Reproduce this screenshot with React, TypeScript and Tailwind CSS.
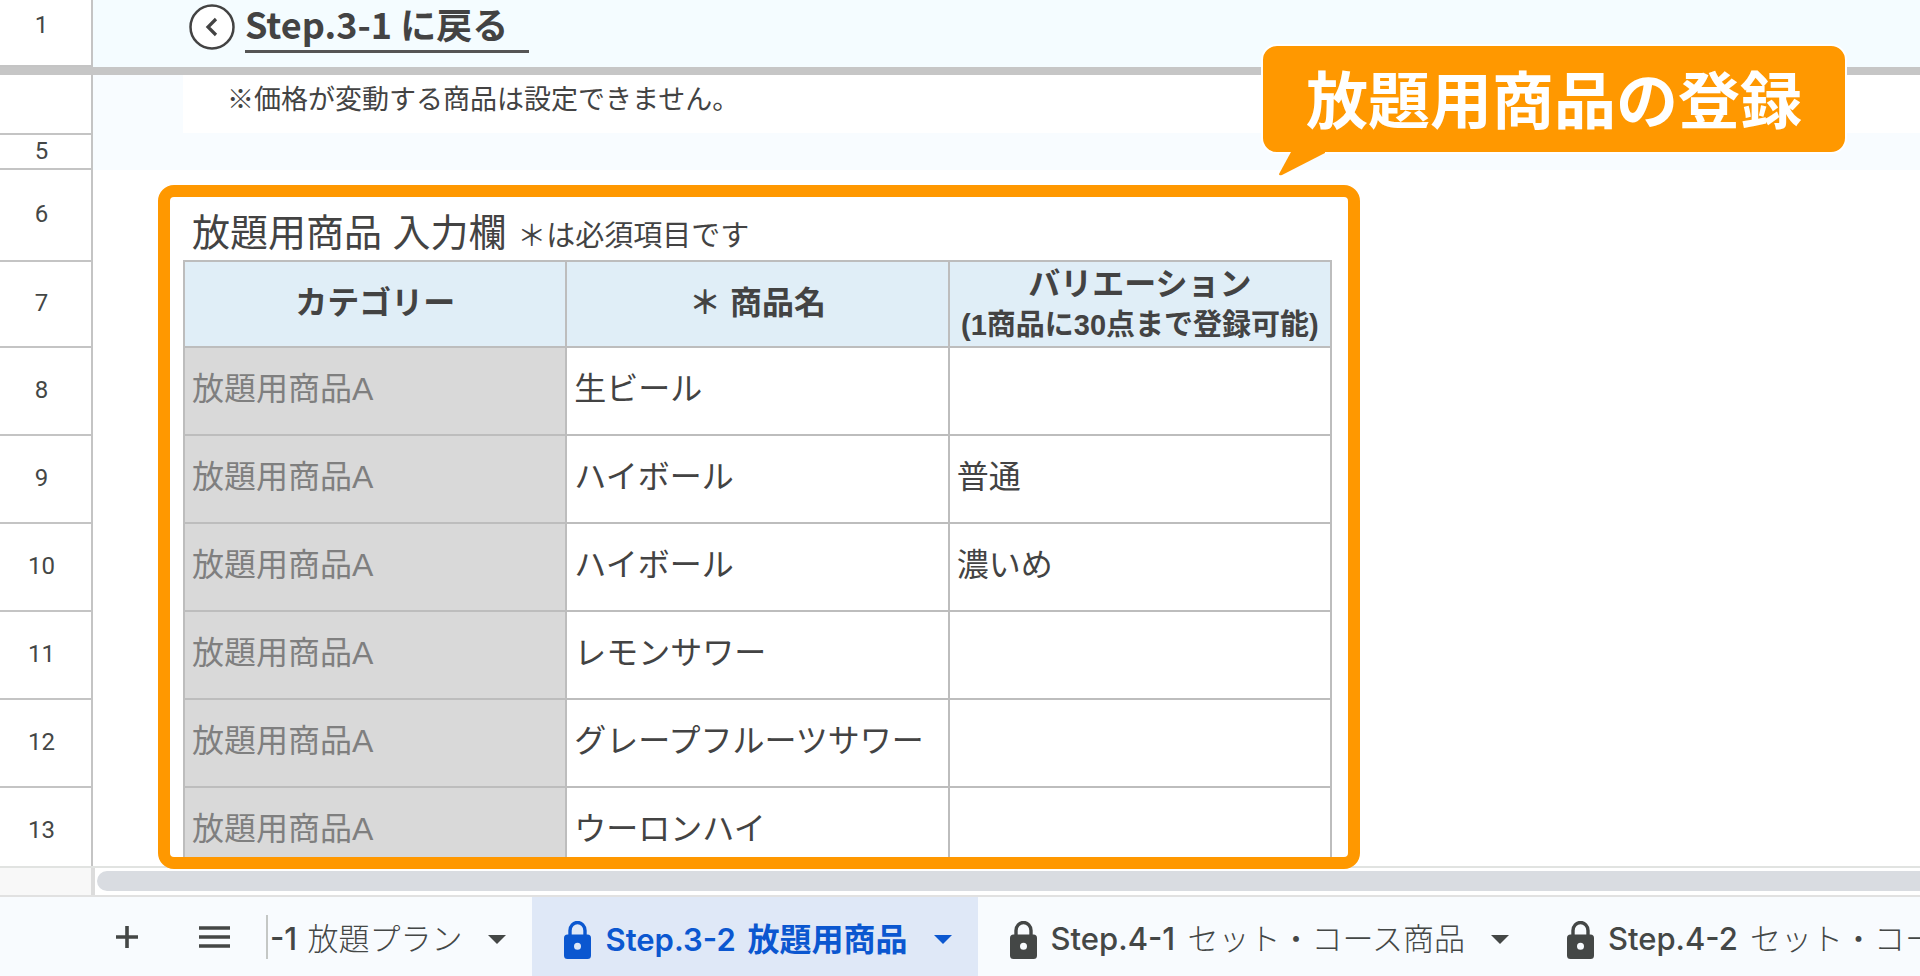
type Product = { row: number; category: string; name: string; variation: string };

const products: Product[] = [
    { row: 8, category: "放題用商品A", name: "生ビール", variation: "" },
    { row: 9, category: "放題用商品A", name: "ハイボール", variation: "普通" },
    { row: 10, category: "放題用商品A", name: "ハイボール", variation: "濃いめ" },
    { row: 11, category: "放題用商品A", name: "レモンサワー", variation: "" },
    { row: 12, category: "放題用商品A", name: "グレープフルーツサワー", variation: "" },
    { row: 13, category: "放題用商品A", name: "ウーロンハイ", variation: "" },
];

const rowHeaders = [
    { label: "", height: "h-[60px]" },
    { label: "5", height: "h-[35px]" },
    { label: "6", height: "h-[92px]" },
    { label: "7", height: "h-[86px]" },
    ...products.map((p) => ({ label: String(p.row), height: "h-[88px]" })),
];

function RowHeader({ label, height }: { label: string; height: string }) {
    return (
        <div
            className={`${height} flex shrink-0 items-center justify-center border-b-2 border-[#c4c4c4] pr-2 pb-0.5 font-['Roboto',sans-serif] text-2xl text-[#444746]`}
        >
            {label}
        </div>
    );
}

function LockIcon() {
    return (
        <svg width="27" height="38" viewBox="0 0 27 38" className="shrink-0" aria-hidden="true">
            <path d="M6 15V9.5a7.5 8 0 0 1 15 0V15" fill="none" stroke="currentColor" strokeWidth="3.4" />
            <path
                fillRule="evenodd"
                fill="currentColor"
                d="M3.5 13.5h20A3.5 3.5 0 0 1 27 17v17.500a3.500 3.500 0 0 1-3.500 3.500h-20A3.500 3.500 0 0 1 0 34.500V17a3.500 3.500 0 0 1 3.500-3.500zM13.500 21.800a3.500 3.500 0 1 0 0 7 3.500 3.500 0 0 0 0-7z"
            />
        </svg>
    );
}

function Caret() {
    return (
        <svg width="18" height="9" viewBox="0 0 18 9" className="shrink-0" aria-hidden="true">
            <path d="M0 0h18L9 9z" fill="currentColor" />
        </svg>
    );
}

function SheetTab({ step, name, active = false }: { step: string; name: string; active?: boolean }) {
    return (
        <button
            type="button"
            role="tab"
            aria-selected={active}
            className={`flex h-full shrink-0 items-center pt-1.5 pr-[26px] pl-8 whitespace-nowrap ${
                active ? "bg-[#dfe8f7] text-[#0b57d0]" : "text-[#444746]"
            }`}
        >
            <LockIcon />
            <span className={active ? "ml-3.5 font-semibold" : "ml-3.5 font-medium"}>
                {step} <span className={active ? "ml-1 text-[32px] font-semibold" : "ml-1 font-light"}>{name}</span>
            </span>
            <span className="ml-[26px]">
                <Caret />
            </span>
        </button>
    );
}

function ProductTable() {
    return (
        <table className="ml-[90px] w-[1149px] table-fixed border-separate border-spacing-0 border-t-2 border-l-2 border-[#bdbdbd] text-[32px] leading-10">
            <thead>
                <tr className="h-[86px] bg-[#e0eef7] text-center">
                    <th className="border-r-2 border-b-2 border-[#bdbdbd] p-0 pb-0.5">カテゴリー</th>
                    <th className="border-r-2 border-b-2 border-[#bdbdbd] p-0 pb-0.5">＊ 商品名</th>
                    <th className="border-r-2 border-b-2 border-[#bdbdbd] p-0 whitespace-nowrap">
                        バリエーション
                        <br />
                        <span className="text-[29px]">(1商品に30点まで登録可能)</span>
                    </th>
                </tr>
            </thead>
            <tbody>
                {products.map((p) => (
                    <tr key={p.row} className="h-[88px]">
                        <td className="border-r-2 border-b-2 border-[#bdbdbd] bg-[#d9d9d9] p-0 pb-1 pl-[7px] text-[#7f7f7f]">
                            {p.category}
                        </td>
                        <td className="border-r-2 border-b-2 border-[#bdbdbd] p-0 pb-1 pl-[7px]">{p.name}</td>
                        <td className="border-r-2 border-b-2 border-[#bdbdbd] p-0 pb-1 pl-[7px]">{p.variation}</td>
                    </tr>
                ))}
            </tbody>
        </table>
    );
}

function Callout() {
    return (
        <div className="absolute top-11 right-[73px] rounded-2xl border-2 border-white bg-[#ff9800] px-[43px] pt-1.5 pb-2.5 font-['Noto_Sans_CJK_JP',sans-serif] text-[62px] leading-[90px] font-bold whitespace-nowrap text-white">
            放題用商品の登録
            <svg width="52" height="28" viewBox="0 0 52 28" className="absolute top-full left-3" aria-hidden="true">
                <path d="M16 0L4 22q0 2 3 1L50 1V0z" fill="#ff9800" />
            </svg>
        </div>
    );
}

export default function App() {
    return (
        <div className="relative flex h-screen flex-col overflow-hidden bg-white font-['Liberation_Sans','Noto_Sans_CJK_JP',sans-serif] text-[#434343]">
            {/* frozen row */}
            <div className="flex h-[67px] shrink-0">
                <div className="flex w-[93px] shrink-0 items-center justify-center border-r-2 border-b-2 border-[#c4c4c4] pr-2 pb-4 font-['Roboto',sans-serif] text-2xl text-[#444746]">
                    1
                </div>
                <div className="flex-1 bg-[#f4fcff] pl-24">
                    <a
                        href="#step-3-1"
                        className="flex items-start gap-2.5 font-['Noto_Sans_CJK_JP',sans-serif] text-[36px] leading-[46px] font-bold"
                    >
                        <svg width="46" height="46" viewBox="0 0 46 46" className="mt-1" aria-hidden="true">
                            <circle cx="23" cy="23" r="21.500" fill="#fff" stroke="currentColor" strokeWidth="2.500" />
                            <path d="M27 15l-8 8 8 8" fill="none" stroke="currentColor" strokeWidth="3.200" />
                        </svg>
                        <span className="min-w-[284px] border-b-[3px] border-[#555] pb-1">Step.3-1 に戻る</span>
                    </a>
                </div>
            </div>
            <div className="h-2 shrink-0 bg-[#c6c6c6]" />

            <div className="relative min-h-0 flex-1">
                <div className="flex h-full overflow-hidden">
                    <div className="flex w-[93px] shrink-0 flex-col border-r-2 border-[#c4c4c4]">
                        {rowHeaders.map((r, i) => (
                            <RowHeader key={i} label={r.label} height={r.height} />
                        ))}
                    </div>
                    <div className="min-w-0 flex-1">
                        <div className="h-[95px] bg-[#f8fcff] pl-[90px]">
                            <p className="h-[58px] bg-white pl-11 font-['Noto_Sans_CJK_JP',sans-serif] text-[27px] leading-[46px]">
                                ※価格が変動する商品は設定できません。
                            </p>
                        </div>
                        <h2 className="flex h-[90px] items-end pl-[99px] text-[38px] leading-[48px] whitespace-pre">
                            <span>
                                放題用商品 入力欄 <span className="text-[29px]">＊は必須項目です</span>
                            </span>
                        </h2>
                        <ProductTable />
                    </div>
                </div>
                <div className="pointer-events-none absolute top-[110px] -bottom-[3px] left-[158px] z-10 w-[1202px] rounded-2xl border-[12px] border-[#ff9800]" />
            </div>

            {/* horizontal scrollbar */}
            <div className="flex h-[29px] shrink-0 border-t-2 border-[#e1e3e1]">
                <div className="w-[95px] shrink-0 border-r-4 border-[#dcdcdc] bg-[#f8f8f8]" />
                <div className="flex-1 pt-[3px] pl-0.5">
                    <div className="h-5 rounded-l-full bg-[#d9dce1]" />
                </div>
            </div>

            <nav className="flex h-[81px] shrink-0 items-center border-t-2 border-[#e1e1e1] bg-[#f8fbfe] font-['Inter','Noto_Sans_CJK_JP',sans-serif] text-[31px] text-[#444746]">
                <button type="button" aria-label="シートを追加" className="ml-[116px]">
                    <svg width="22" height="22" viewBox="0 0 22 22" aria-hidden="true">
                        <path d="M11 0v22M0 11h22" stroke="currentColor" strokeWidth="3.600" />
                    </svg>
                </button>
                <button type="button" aria-label="すべてのシート" className="ml-[61px]">
                    <svg width="31" height="22" viewBox="0 0 31 22" aria-hidden="true">
                        <path d="M0 2h31M0 11h31M0 20h31" stroke="currentColor" strokeWidth="3.400" />
                    </svg>
                </button>
                <div role="tablist" className="flex h-full min-w-0 flex-1 items-center overflow-hidden pl-9">
                    <span className="h-11 w-0.5 shrink-0 bg-[#c4c7c5]" />
                    <button
                        type="button"
                        role="tab"
                        aria-selected={false}
                        className="flex h-full shrink-0 items-center pt-1.5 pr-[26px] pl-0.5 font-medium whitespace-nowrap"
                    >
                        <span>
                            -1 <span className="ml-0.5 font-light">放題プラン</span>
                        </span>
                        <span className="ml-[26px]">
                            <Caret />
                        </span>
                    </button>
                    <SheetTab step="Step.3-2" name="放題用商品" active />
                    <SheetTab step="Step.4-1" name="セット・コース商品" />
                    <SheetTab step="Step.4-2" name="セット・コー" />
                </div>
            </nav>

            <Callout />
        </div>
    );
}
